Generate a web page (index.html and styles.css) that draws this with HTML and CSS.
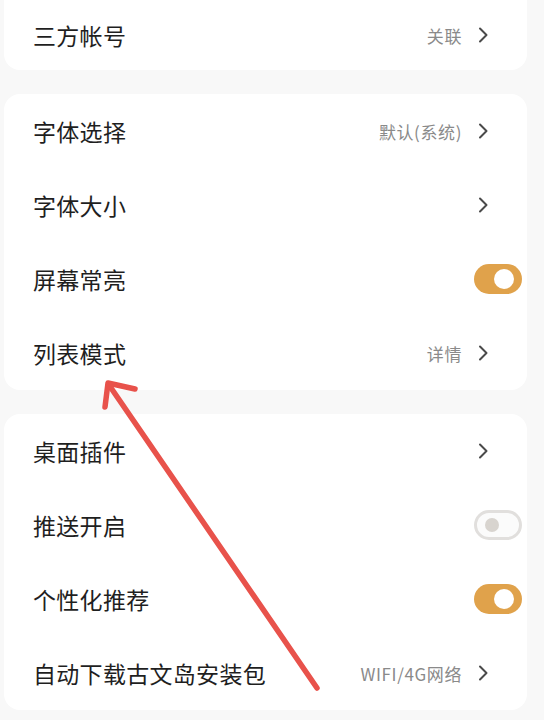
FILE: index.html
```html
<!DOCTYPE html>
<html lang="zh-CN">
<head>
<meta charset="utf-8">
<title>设置</title>
<link rel="stylesheet" href="styles.css">
</head>
<body>
<div class="page">
  <section class="card card-first">
    <div class="row row-short">
      <span class="label">三方帐号</span>
      <span class="value">关联</span>
      <svg class="chev" viewBox="0 0 10 16" width="10" height="16"><polyline points="2,1.5 8.5,8 2,14.5"/></svg>
    </div>
  </section>

  <section class="card">
    <div class="row">
      <span class="label">字体选择</span>
      <span class="value">默认(系统)</span>
      <svg class="chev" viewBox="0 0 10 16" width="10" height="16"><polyline points="2,1.5 8.5,8 2,14.5"/></svg>
    </div>
    <div class="row">
      <span class="label">字体大小</span>
      <svg class="chev" viewBox="0 0 10 16" width="10" height="16"><polyline points="2,1.5 8.5,8 2,14.5"/></svg>
    </div>
    <div class="row">
      <span class="label">屏幕常亮</span>
      <span class="toggle on"><span class="knob"></span></span>
    </div>
    <div class="row">
      <span class="label">列表模式</span>
      <span class="value">详情</span>
      <svg class="chev" viewBox="0 0 10 16" width="10" height="16"><polyline points="2,1.5 8.5,8 2,14.5"/></svg>
    </div>
  </section>

  <section class="card">
    <div class="row">
      <span class="label">桌面插件</span>
      <svg class="chev" viewBox="0 0 10 16" width="10" height="16"><polyline points="2,1.5 8.5,8 2,14.5"/></svg>
    </div>
    <div class="row">
      <span class="label">推送开启</span>
      <span class="toggle off"><span class="knob"></span></span>
    </div>
    <div class="row">
      <span class="label">个性化推荐</span>
      <span class="toggle on"><span class="knob"></span></span>
    </div>
    <div class="row">
      <span class="label">自动下载古文岛安装包</span>
      <span class="value">WIFI/4G网络</span>
      <svg class="chev" viewBox="0 0 10 16" width="10" height="16"><polyline points="2,1.5 8.5,8 2,14.5"/></svg>
    </div>
  </section>

  <svg class="annotation" viewBox="0 0 544 720" width="544" height="720">
    <g fill="none" stroke="#e8524b" stroke-width="5.5" stroke-linecap="round" stroke-linejoin="round">
      <line x1="317" y1="688" x2="109" y2="385"/>
      <polyline points="135,389 108,383 105,407"/>
    </g>
  </svg>
</div>
</body>
</html>
```

FILE: styles.css
```css
html, body {
  margin: 0;
  padding: 0;
}

body {
  background: #f8f8f8;
  font-family: "Noto Sans CJK SC", "Noto Sans", sans-serif;
  width: 544px;
  height: 720px;
  overflow: hidden;
}

.page {
  position: relative;
  display: flex;
  flex-direction: column;
  gap: 24px;
  padding: 0 17px 0 4px;
  height: 720px;
  box-sizing: border-box;
}

.card {
  background: #ffffff;
  border-radius: 16px;
  display: flex;
  flex-direction: column;
}

.card-first {
  border-radius: 0 0 16px 16px;
}

.row {
  display: flex;
  align-items: center;
  height: 74px;
  padding: 0 5px 0 29px;
}

.row-short {
  height: 70px;
}

.label {
  flex: 1;
  font-size: 23px;
  letter-spacing: 0.3px;
  color: #1f1f1f;
  line-height: 1;
}

.value {
  font-size: 17px;
  letter-spacing: 0.6px;
  color: #8a8a8a;
  line-height: 1;
  margin-right: 16px;
}

.chev {
  margin-right: 34px;
  flex: none;
}

.chev polyline {
  fill: none;
  stroke: #4a4a4a;
  stroke-width: 2;
  stroke-linecap: round;
  stroke-linejoin: round;
}

.toggle {
  flex: none;
  width: 48px;
  height: 30px;
  border-radius: 15px;
  box-sizing: border-box;
  display: flex;
  align-items: center;
}

.toggle.on {
  background: #e0a24b;
  justify-content: flex-end;
  padding-right: 8px;
}

.toggle.on .knob {
  width: 20px;
  height: 20px;
  border-radius: 50%;
  background: #ffffff;
}

.toggle.off {
  background: #fbfbfb;
  border: 3px solid #e1dfdd;
  justify-content: flex-start;
  padding-left: 8px;
}

.toggle.off .knob {
  width: 14px;
  height: 14px;
  border-radius: 50%;
  background: #d8d4cf;
}

.annotation {
  position: absolute;
  left: 0;
  top: 0;
  pointer-events: none;
}
```
